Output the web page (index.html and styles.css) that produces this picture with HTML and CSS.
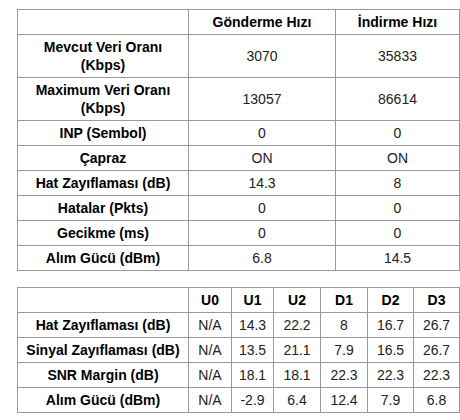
FILE: index.html
```html
<!DOCTYPE html>
<html lang="tr">
<head>
<meta charset="utf-8">
<link rel="stylesheet" href="styles.css">
</head>
<body>
<div class="page">
<table class="grid">
  <colgroup><col class="c-label"><col class="c-up"><col class="c-down"></colgroup>
  <tr><th></th><th>Gönderme Hızı</th><th>İndirme Hızı</th></tr>
  <tr><th>Mevcut Veri Oranı<br>(Kbps)</th><td>3070</td><td>35833</td></tr>
  <tr><th>Maximum Veri Oranı<br>(Kbps)</th><td>13057</td><td>86614</td></tr>
  <tr><th>INP (Sembol)</th><td>0</td><td>0</td></tr>
  <tr><th>Çapraz</th><td>ON</td><td>ON</td></tr>
  <tr><th>Hat Zayıflaması (dB)</th><td>14.3</td><td>8</td></tr>
  <tr><th>Hatalar (Pkts)</th><td>0</td><td>0</td></tr>
  <tr><th>Gecikme (ms)</th><td>0</td><td>0</td></tr>
  <tr><th>Alım Gücü (dBm)</th><td>6.8</td><td>14.5</td></tr>
</table>
<table class="grid">
  <colgroup><col class="c-label"><col class="c-u0"><col class="c-u1"><col class="c-u2"><col class="c-d1"><col class="c-d2"><col class="c-d3"></colgroup>
  <tr><th></th><th>U0</th><th>U1</th><th>U2</th><th>D1</th><th>D2</th><th>D3</th></tr>
  <tr><th>Hat Zayıflaması (dB)</th><td>N/A</td><td>14.3</td><td>22.2</td><td>8</td><td>16.7</td><td>26.7</td></tr>
  <tr><th>Sinyal Zayıflaması (dB)</th><td>N/A</td><td>13.5</td><td>21.1</td><td>7.9</td><td>16.5</td><td>26.7</td></tr>
  <tr><th>SNR Margin (dB)</th><td>N/A</td><td>18.1</td><td>18.1</td><td>22.3</td><td>22.3</td><td>22.3</td></tr>
  <tr><th>Alım Gücü (dBm)</th><td>N/A</td><td>-2.9</td><td>6.4</td><td>12.4</td><td>7.9</td><td>6.8</td></tr>
</table>
</div>
</body>
</html>
```
FILE: styles.css
```css
html, body {
  margin: 0;
  padding: 0;
  background: #ffffff;
}
.page {
  padding: 9px 0 0 17px;
  display: flex;
  flex-direction: column;
  gap: 16px;
  font-family: "Liberation Sans", Arial, sans-serif;
  font-size: 14px;
  color: #1a1a1a;
}
.grid {
  border-collapse: collapse;
  table-layout: fixed;
  width: 442px;
}
.grid th, .grid td {
  border: 1px solid #999999;
  padding: 3px 2px;
  line-height: 18px;
  text-align: center;
  vertical-align: middle;
}
.grid th {
  font-weight: bold;
  color: #000000;
}
.grid td {
  font-weight: normal;
  color: #222222;
}
.c-label { width: 171px; }
.c-up { width: 147px; }
.c-down { width: 124px; }
.c-u0 { width: 43px; }
.c-u1 { width: 42px; }
.c-u2 { width: 47px; }
.c-d1 { width: 47px; }
.c-d2 { width: 46px; }
.c-d3 { width: 46px; }
```
